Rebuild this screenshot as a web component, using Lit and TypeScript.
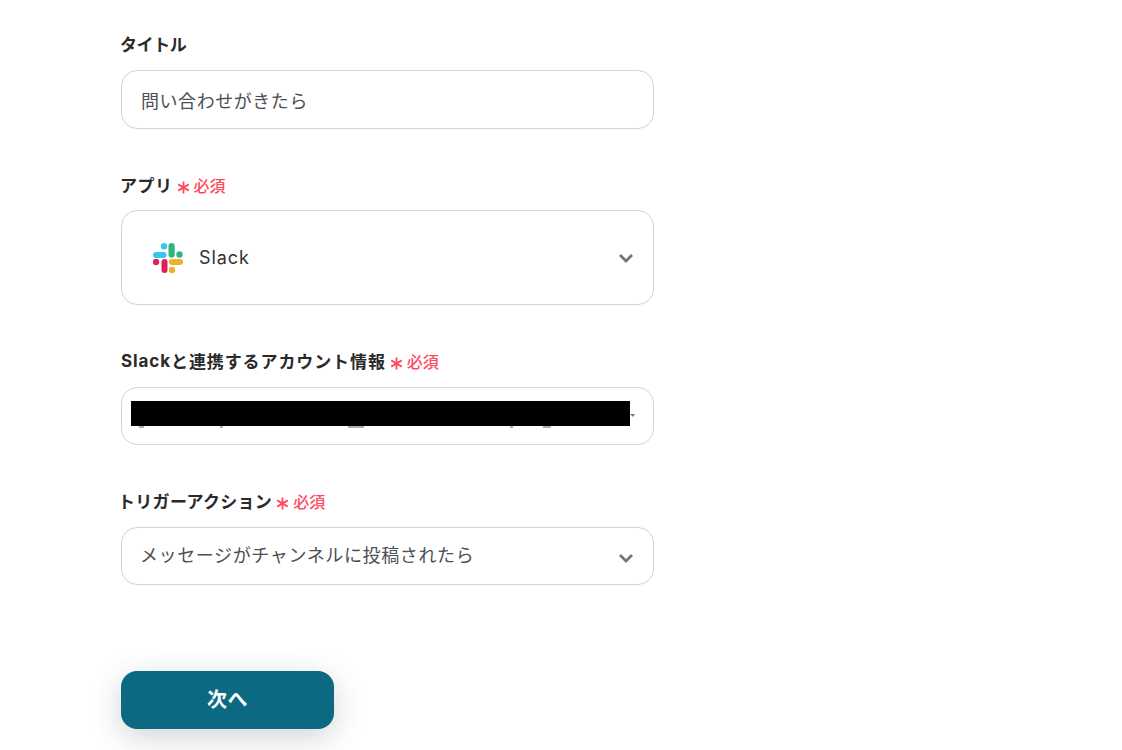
import { LitElement, html, css, svg } from "lit";
import { customElement } from "lit/decorators.js";

const chevron = svg`<svg class="chev" width="16" height="10" viewBox="0 0 16 10"><path d="M2 2l6 6 6-6" fill="none" stroke="#757575" stroke-width="2.8"/></svg>`;

const slack = svg`<svg class="slack" width="30" height="30" viewBox="0 0 30 30">
  <g fill="#36c5f0"><rect x="0" y="9" width="13.5" height="6" rx="3"/><circle cx="11" cy="3.2" r="3.2"/></g>
  <g fill="#2eb67d"><rect x="15.5" y="0" width="6.2" height="14.5" rx="3.1"/><circle cx="26.5" cy="11.5" r="3.2"/></g>
  <g fill="#ecb22e"><rect x="16" y="16" width="14" height="6" rx="3"/><circle cx="19" cy="27" r="3.2"/></g>
  <g fill="#e01e5a"><rect x="8.5" y="16" width="6" height="14" rx="3"/><circle cx="3" cy="19" r="3.2"/></g>
</svg>`;

@customElement("app-root")
export class AppRoot extends LitElement {
  static styles = css`
    :host {
      display: block;
      height: 750px;
      overflow: hidden;
      background: #fff;
      font-family: "Noto Sans CJK JP", "Noto Sans", sans-serif;
      color: #2b2b2b;
    }
    .form {
      width: 533px;
      margin-left: 121px;
      padding-top: 30px;
      display: flex;
      flex-direction: column;
    }
    .label {
      box-sizing: border-box;
      height: 28px;
      padding-bottom: 2px;
      display: flex;
      align-items: center;
      font-size: 17px;
      font-weight: 700;
      letter-spacing: 0.5px;
      color: #2a2a2a;
      margin-left: -1px;
      white-space: nowrap;
    }
    .tight { letter-spacing: -0.4px; }
    .shift { margin-left: -3px; letter-spacing: 0.3px; }
    .wide { letter-spacing: 0.9px; }
    .latin {
      margin-left: 1px;
      padding-top: 2px;
      font-family: Inter, "Noto Sans", sans-serif;
      letter-spacing: 0.9px;
    }
    .mark {
      display: inline-flex;
      align-items: center;
      margin-left: 4px;
      color: #ff4a5e;
      font-size: 16px;
      font-weight: 500;
      letter-spacing: 0;
      margin-top: 2px;
    }
    .mark svg { margin-right: 4px; margin-top: 4px; }
    .field {
      box-sizing: border-box;
      height: 59px;
      margin-top: 12px;
      border: 1px solid #cfd3da;
      border-radius: 16px;
      display: flex;
      align-items: center;
      padding: 0 19px;
      font-size: 18px;
      letter-spacing: 0.55px;
      color: #4d4f52;
      background: #fff;
      position: relative;
    }
    .field + .label { margin-top: 42px; }
    .app { height: 95px; margin-top: 11px; padding-left: 31px; }
    .app .chev { margin-top: -5px; }
    .short { height: 58px; }
    .last { padding: 0 18px 5px; letter-spacing: 0.62px; }
    .last .chev { margin-top: -3px; }
    .app-name {
      margin-left: 16px;
      font-family: Inter, "Noto Sans", sans-serif;
      font-size: 18px;
      letter-spacing: 0.9px;
      color: #333;
    }
    .chev { position: absolute; right: 19px; top: 50%; margin-top: -4px; }
    .redact { position: absolute; left: 9px; top: 13px; width: 499px; height: 25px; background: #000; }
    .tip {
      position: absolute;
      left: 508px;
      top: 26px;
      width: 0;
      height: 0;
      border-top: 3px solid #777;
      border-left: 3px solid transparent;
      border-right: 2px solid transparent;
    }
    .under {
      position: absolute;
      top: 38px;
      height: 2px;
      background: #77797c;
      opacity: 0.6;
    }
    .next {
      box-sizing: border-box;
      align-self: flex-start;
      width: 213px;
      height: 58px;
      margin-top: 86px;
      padding: 0 0 3px;
      border: 0;
      border-radius: 16px;
      background: #0b6982;
      color: #fff;
      font-family: inherit;
      font-size: 20px;
      font-weight: 700;
      letter-spacing: 0.5px;
      box-shadow: 0 8px 30px rgba(40, 60, 70, 0.22);
    }
  `;

  private mark() {
    return html`<span class="mark"><svg width="13" height="13" viewBox="0 0 13 13"><path d="M6.5 0.5v12M1.2 3.4l10.6 6.2M11.8 3.4L1.2 9.6" stroke="#ff4a5e" stroke-width="1.8" fill="none"/></svg>必須</span>`;
  }

  render() {
    return html`
      <div class="form">
        <div class="label tight">タイトル</div>
        <div class="field">問い合わせがきたら</div>

        <div class="label">アプリ${this.mark()}</div>
        <div class="field app">${slack}<span class="app-name">Slack</span>${chevron}</div>

        <div class="label wide"><span class="latin">Slack</span>と連携するアカウント情報${this.mark()}</div>
        <div class="field short">
          <span class="under" style="left:17px;width:5px"></span>
          <span class="under" style="left:98px;width:3px"></span>
          <span class="under" style="left:226px;width:16px"></span>
          <span class="under" style="left:388px;width:3px"></span>
          <span class="under" style="left:421px;width:8px"></span>
          <span class="redact"></span><span class="tip"></span>
        </div>

        <div class="label shift">トリガーアクション${this.mark()}</div>
        <div class="field short last">メッセージがチャンネルに投稿されたら${chevron}</div>

        <button class="next">次へ</button>
      </div>
    `;
  }
}
